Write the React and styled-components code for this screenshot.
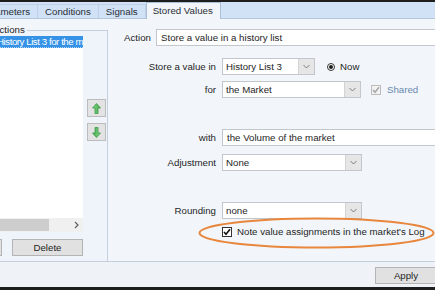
import React from "react";
import styled, { createGlobalStyle } from "styled-components";

const Global = createGlobalStyle`
  *, *::before, *::after { box-sizing: border-box; }
  html, body { margin: 0; padding: 0; background: #f2f6fb; }
  body {
    font-family: "Liberation Sans", Arial, sans-serif;
    font-size: 9.7px;
    color: #1e1e1e;
  }
`;

const Window = styled.div`
  position: relative;
  width: 435px;
  height: 290px;
  overflow: hidden;
  display: flex;
  flex-direction: column;
  background: #f2f6fb;
`;

const Edge = styled.div`
  flex: none;
  height: ${(p) => p.$h}px;
  background: #1e1e1e;
`;

const TabStrip = styled.div`
  flex: none;
  height: 17px;
  display: flex;
  align-items: flex-end;
  background: #d1e2f7;
  border-bottom: 1px solid #b3c6dc;
  position: relative;
  z-index: 1;
`;

const Tab = styled.div`
  flex: none;
  height: ${(p) => (p.$active ? 17 : 14)}px;
  line-height: ${(p) => (p.$active ? 16 : 14)}px;
  padding: 0 ${(p) => (p.$active ? "7px 0 6px" : "7px")};
  margin-bottom: ${(p) => (p.$active ? -1 : 0)}px;
  margin-left: ${(p) => p.$ml ?? -1}px;
  background: ${(p) => (p.$active ? "#f2f6fb" : "#d1e2f7")};
  border: 1px solid ${(p) => (p.$active ? "#aabfd8" : "#bdd0e6")};
  border-bottom: none;
  color: #2a2f36;
  white-space: nowrap;
`;

const Page = styled.div`
  flex: none;
  height: 243px;
  display: flex;
  border-bottom: 1px solid #c3cfdc;
`;

const Group = styled.fieldset`
  flex: none;
  width: 128px;
  margin: 5px 0 0 -20px;
  padding: 0 0 0 10px;
  min-width: 0;
  border: 1px solid #c4d0dd;
  border-bottom: none;
  background: #eff4fa;
`;

const Legend = styled.legend`
  padding: 0 2px;
  line-height: 12px;
  color: #1e1e1e;
`;

const GroupBody = styled.div`
  display: flex;
`;

const ListBox = styled.div`
  flex: none;
  width: 92px;
  height: 196px;
  background: #ffffff;
  display: flex;
  flex-direction: column;
  overflow: hidden;
`;

const ListItems = styled.div`
  flex: 1;
`;

const ListItem = styled.div`
  height: 12px;
  line-height: 11px;
  padding-left: 6px;
  white-space: nowrap;
  overflow: hidden;
  letter-spacing: -0.45px;
  background: ${(p) => (p.$selected ? "#3592e6" : "transparent")};
  color: ${(p) => (p.$selected ? "#ffffff" : "#1e1e1e")};
  border-bottom: 1px dotted ${(p) => (p.$selected ? "rgba(255,255,255,0.6)" : "transparent")};
`;

const HScroll = styled.div`
  flex: none;
  height: 14px;
  display: flex;
  align-items: stretch;
  background: #f0f0f0;
  padding: 1px 0;
`;

const Thumb = styled.div`
  flex: none;
  width: 58px;
  background: #cdcdcd;
`;

const ScrollSpacer = styled.div`
  flex: 1;
`;

const ScrollArrow = styled.div`
  flex: none;
  width: 14px;
  display: flex;
  align-items: center;
  justify-content: center;
`;

const ArrowCol = styled.div`
  flex: none;
  margin-left: 4px;
  padding-top: 63px;
  display: flex;
  flex-direction: column;
  gap: 6px;
`;

const IconButton = styled.div`
  width: 19px;
  height: 18px;
  background: #e3e3e3;
  border: 1px solid #bcbcbc;
  display: flex;
  align-items: center;
  justify-content: center;
`;

const ButtonRow = styled.div`
  display: flex;
  gap: 10px;
  margin-top: 7px;
`;

const Button = styled.div`
  flex: none;
  width: ${(p) => p.$w}px;
  height: 17px;
  margin-left: ${(p) => p.$ml ?? 0}px;
  margin-right: ${(p) => p.$mr ?? 0}px;
  background: #e1e1e1;
  border: 1px solid #b4b4b4;
  line-height: 15px;
  text-align: center;
  color: #1e1e1e;
  white-space: nowrap;
`;

const Form = styled.div`
  flex: 1;
  min-width: 0;
  padding-top: 10px;
  display: flex;
  flex-direction: column;
`;

const ActionRow = styled.div`
  display: flex;
  align-items: center;
  padding-left: 16px;
  height: 17px;
`;

const ActionLabel = styled.div`
  flex: none;
  width: 32px;
  white-space: nowrap;
`;

const Row = styled.div`
  display: flex;
  align-items: center;
  height: ${(p) => p.$h ?? 17}px;
  margin-top: ${(p) => p.$mt}px;
`;

const Label = styled.div`
  flex: none;
  width: 108px;
  margin-right: 6px;
  text-align: right;
  white-space: nowrap;
`;

const TextBox = styled.div`
  flex: 1;
  height: 17px;
  margin-right: -20px;
  background: #ffffff;
  border: 1px solid #c2c7cd;
  line-height: 15px;
  padding-left: 4px;
  white-space: nowrap;
`;

const Combo = styled.div`
  flex: none;
  width: ${(p) => p.$w}px;
  height: 17px;
  background: #ffffff;
  border: 1px solid #c2c7cd;
  display: flex;
`;

const ComboText = styled.div`
  flex: 1;
  line-height: 15px;
  padding-left: 3px;
  white-space: nowrap;
  overflow: hidden;
`;

const DropButton = styled.div`
  flex: none;
  width: 16px;
  background: #e6e6e6;
  border-left: 1px solid #d3d3d3;
  display: flex;
  align-items: center;
  justify-content: center;
`;

const Option = styled.div`
  display: flex;
  align-items: center;
  gap: ${(p) => p.$gap}px;
  margin-left: ${(p) => p.$ml}px;
  color: ${(p) => (p.$disabled ? "#6a88ad" : "#1e1e1e")};
  white-space: nowrap;
`;

const RadioDot = styled.div`
  width: 8px;
  height: 8px;
  border-radius: 50%;
  border: 1px solid #333;
  background: #fff;
  display: flex;
  align-items: center;
  justify-content: center;
  &::after {
    content: "";
    width: 4px;
    height: 4px;
    border-radius: 50%;
    background: #1e1e1e;
  }
`;

const CheckBox = styled.div`
  flex: none;
  width: 10px;
  height: 10px;
  border: 1px solid ${(p) => (p.$disabled ? "#bcbcbc" : "#333333")};
  background: ${(p) => (p.$disabled ? "#f2f2f2" : "#ffffff")};
  display: flex;
  align-items: center;
  justify-content: center;
`;

const BottomBar = styled.div`
  flex: none;
  height: 25px;
  display: flex;
  justify-content: flex-end;
  padding-top: 5px;
  background: #eff3f8;
`;

const Overlay = styled.svg`
  position: absolute;
  left: 0;
  top: 0;
  pointer-events: none;
`;

const Chevron = () => (
  <svg width="7" height="5" viewBox="0 0 7 5">
    <path d="M0.5 1 L3.5 4 L6.5 1" fill="none" stroke="#7c7c7c" strokeWidth="1" />
  </svg>
);

const Check = ({ color }) => (
  <svg width="8" height="8" viewBox="0 0 8 8">
    <path d="M1 4 L3 6.3 L7 1.2" fill="none" stroke={color} strokeWidth="1.6" />
  </svg>
);

const GreenArrow = ({ down }) => (
  <svg width="9" height="11" viewBox="0 0 9 11" style={down ? { transform: "rotate(180deg)" } : undefined}>
    <defs>
      <linearGradient id={down ? "gd" : "gu"} x1="0" y1="0" x2="1" y2="0">
        <stop offset="0" stopColor="#8ad98a" />
        <stop offset="1" stopColor="#3ea84a" />
      </linearGradient>
    </defs>
    <path
      d="M4.5 0.5 L8.5 5 H6 V10.5 H3 V5 H0.5 Z"
      fill={`url(#${down ? "gd" : "gu"})`}
      stroke="#3c9a46"
      strokeWidth="0.8"
    />
  </svg>
);

const Field = ({ label, mt, children }) => (
  <Row $mt={mt}>
    <Label>{label}</Label>
    {children}
  </Row>
);

const Dropdown = ({ w, value }) => (
  <Combo $w={w}>
    <ComboText>{value}</ComboText>
    <DropButton>
      <Chevron />
    </DropButton>
  </Combo>
);

export default function App() {
  return (
    <>
      <Global />
      <Window>
        <Edge $h={2} />
        <TabStrip>
          <Tab $ml={-28}>Parameters</Tab>
          <Tab>Conditions</Tab>
          <Tab>Signals</Tab>
          <Tab $active $ml={0}>Stored Values</Tab>
        </TabStrip>
        <Page>
          <Group>
            <Legend>Actions</Legend>
            <GroupBody>
              <ListBox>
                <ListItems>
                  <ListItem $selected>History List 3 for the market</ListItem>
                </ListItems>
                <HScroll>
                  <Thumb />
                  <ScrollSpacer />
                  <ScrollArrow>
                    <svg width="5" height="8" viewBox="0 0 5 8">
                      <path d="M1 1 L4 4 L1 7" fill="none" stroke="#606060" strokeWidth="1.2" />
                    </svg>
                  </ScrollArrow>
                </HScroll>
              </ListBox>
              <ArrowCol>
                <IconButton>
                  <GreenArrow />
                </IconButton>
                <IconButton>
                  <GreenArrow down />
                </IconButton>
              </ArrowCol>
            </GroupBody>
            <ButtonRow>
              <Button $w={60} $ml={-49} />
              <Button $w={71}>Delete</Button>
            </ButtonRow>
          </Group>
          <Form>
            <ActionRow>
              <ActionLabel>Action</ActionLabel>
              <TextBox>Store a value in a history list</TextBox>
            </ActionRow>
            <Field label="Store a value in" mt={12}>
              <Dropdown w={93} value="History List 3" />
              <Option $ml={12} $gap={5}>
                <RadioDot />
                Now
              </Option>
            </Field>
            <Field label="for" mt={6}>
              <Dropdown w={139} value="the Market" />
              <Option $ml={10} $gap={6} $disabled>
                <CheckBox $disabled>
                  <Check color="#a8a8a8" />
                </CheckBox>
                Shared
              </Option>
            </Field>
            <Field label="with" mt={31}>
              <TextBox>the Volume of the market</TextBox>
            </Field>
            <Field label="Adjustment" mt={8}>
              <Dropdown w={140} value="None" />
            </Field>
            <Field label="Rounding" mt={31}>
              <Dropdown w={140} value="none" />
            </Field>
            <Row $mt={7} $h={11}>
              <Label />
              <Option $ml={0} $gap={5}>
                <CheckBox>
                  <Check color="#111" />
                </CheckBox>
                Note value assignments in the market's Log
              </Option>
            </Row>
          </Form>
        </Page>
        <BottomBar>
          <Button $w={62} $mr={-2}>Apply</Button>
        </BottomBar>
        <Edge $h={3} />
        <Overlay width="435" height="290" viewBox="0 0 435 290">
          <ellipse cx="316.5" cy="233" rx="117" ry="14.5" fill="none" stroke="#e8863c" strokeWidth="2" />
        </Overlay>
      </Window>
    </>
  );
}
